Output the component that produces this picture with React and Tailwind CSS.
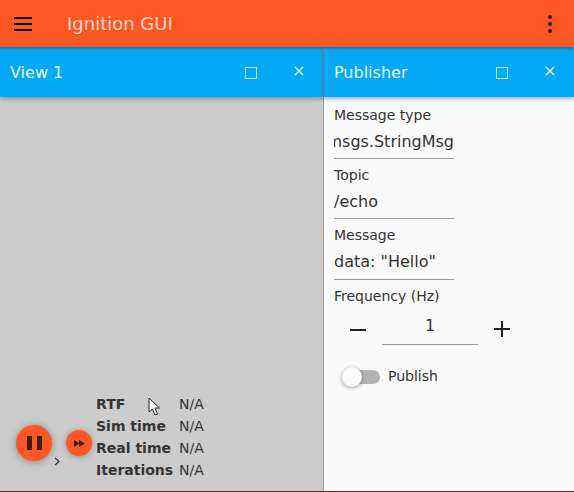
import React from "react";

function Field({ label, value, clip, extra }) {
  return (
    <div className="flex flex-col w-[120px] mb-[6px]">
      <div className="h-[20px] text-[14px] leading-[20px] text-[#333]">{label}</div>
      <div className={"border-b border-[#9e9e9e] overflow-hidden flex items-center text-[16px] text-[#333] whitespace-nowrap " + (extra ? "h-[35px] pb-[1px] " : "h-[34px] ") + (clip ? "justify-end" : "")}>
        <span className="shrink-0">{value}</span>
      </div>
    </div>
  );
}

function Head({ title, className }) {
  return (
    <div className={"h-[50px] bg-[#03a9f4] flex items-center text-[16px] text-[#e8f6fe] shadow-[0_2px_4px_rgba(0,0,0,0.3)] relative " + className}>
      <span className="pl-[10px] flex-1 pt-[1px]">{title}</span>
      <svg width="12" height="12" viewBox="0 0 12 12" className="mr-[37px] mt-[1px]" fill="none" stroke="#bfe7fb" strokeWidth="1"><rect x="0.5" y="0.5" width="11" height="11" /></svg>
      <svg width="10" height="10" viewBox="0 0 10 10" className="mr-[19px] mb-[2px]" fill="none" stroke="#f0faff" strokeWidth="1.3"><path d="M1 1 L9 9 M9 1 L1 9" /></svg>
    </div>
  );
}

function Stat({ k }) {
  return (
    <div className="flex h-[22px] items-center text-[14px] text-[#333]">
      <span className="w-[83px] font-bold whitespace-nowrap">{k}</span>
      <span>N/A</span>
    </div>
  );
}

export default function App() {
  return (
    <div className="w-[574px] h-[492px] flex flex-col overflow-hidden bg-[#cccccc] font-['DejaVu_Sans',sans-serif]">
      <header className="h-[47px] shrink-0 bg-[#ff5722] flex items-center relative z-20 shadow-[0_1px_3px_rgba(0,0,0,0.4)]">
        <svg width="18" height="14" viewBox="0 0 18 14" className="ml-[14px]" fill="#000"><rect y="0" width="18" height="2" /><rect y="6" width="18" height="2" /><rect y="12" width="18" height="2" /></svg>
        <span className="ml-[35px] text-[#fbd9cd] text-[18px] flex-1">Ignition GUI</span>
        <svg width="4" height="18" viewBox="0 0 4 18" className="mr-[22px]" fill="#222"><circle cx="2" cy="2" r="2" /><circle cx="2" cy="9" r="2" /><circle cx="2" cy="16" r="2" /></svg>
      </header>
      <div className="flex-1 flex min-h-0">
        <section className="w-[323px] flex flex-col relative">
          <Head title="View 1" className="z-10" />
          <div className="flex-1 flex items-end pl-[16px] pb-[10px]">
            <div className="flex items-center mb-[20px]">
              <div className="w-[36px] h-[36px] rounded-full bg-[#ff5722] flex items-center justify-center gap-[5px] shadow-[0_1px_8px_rgba(0,0,0,0.35)]">
                <span className="w-[5px] h-[14px] bg-[#3a2018]" />
                <span className="w-[5px] h-[14px] bg-[#3a2018]" />
              </div>
              <div className="w-[26px] h-[26px] ml-[14px] rounded-full bg-[#ff5722] flex items-center justify-center shadow-[0_1px_6px_rgba(0,0,0,0.3)]">
                <svg width="11" height="7" viewBox="0 0 11 7" fill="#3a2018"><path d="M0 0 L5.5 3.5 L0 7Z M5 0 L11 3.5 L5 7Z" /></svg>
              </div>
            </div>
            <div className="ml-[4px] flex flex-col">
              <Stat k="RTF" />
              <Stat k="Sim time" />
              <Stat k="Real time" />
              <Stat k="Iterations" />
            </div>
          </div>
          <svg width="6" height="9" viewBox="0 0 6 9" className="absolute left-[54px] top-[410px]" fill="none" stroke="#333" strokeWidth="1.3"><path d="M1 1 L5 4.5 L1 8" /></svg>
          <svg width="14" height="20" viewBox="0 0 14 20" className="absolute left-[148px] top-[350px]" fill="#fff" stroke="#222" strokeWidth="1"><path d="M1 1 V15 L4.5 12 L7 18 L9.5 17 L7 11 H11.5 Z" /></svg>
        </section>
        <section className="w-[251px] flex flex-col border-l border-[#9a9a9a] bg-[#fafafa]">
          <Head title="Publisher" className="z-10" />
          <div className="flex-1 pl-[10px] pt-[8px] text-[#333] flex flex-col">
            <Field label="Message type" value="ignition.msgs.StringMsg" clip />
            <Field label="Topic" value="/echo" />
            <Field label="Message" value="data: &quot;Hello&quot;" extra />
            <div className="text-[14px] leading-[20px]">Frequency (Hz)</div>
            <div className="flex items-start mt-[2px]">
              <svg width="16" height="16" viewBox="0 0 16 16" className="ml-[16px] mt-[13px]" fill="#222"><rect x="0" y="8" width="16" height="2" /></svg>
              <div className="w-[96px] ml-[16px] h-[37px] border-b border-[#9e9e9e] text-[16px] flex justify-center pt-[6px]">1</div>
              <svg width="16" height="16" viewBox="0 0 16 16" className="ml-[16px] mt-[13px]" fill="#222"><rect x="0" y="7" width="16" height="2" /><rect x="7" y="0" width="2" height="16" /></svg>
            </div>
            <div className="flex items-center mt-[21px] ml-[10px]">
              <div className="relative w-[36px] h-[14px] rounded-full bg-[#b3b3b3]">
                <span className="absolute left-[-2px] top-[-3px] w-[20px] h-[20px] rounded-full bg-[#fafafa] shadow-[0_1px_4px_rgba(0,0,0,0.4)]" />
              </div>
              <span className="ml-[8px] text-[14px]">Publish</span>
            </div>
          </div>
        </section>
      </div>
      <div className="h-[1px] shrink-0 bg-[#7a1c2e]" />
    </div>
  );
}
